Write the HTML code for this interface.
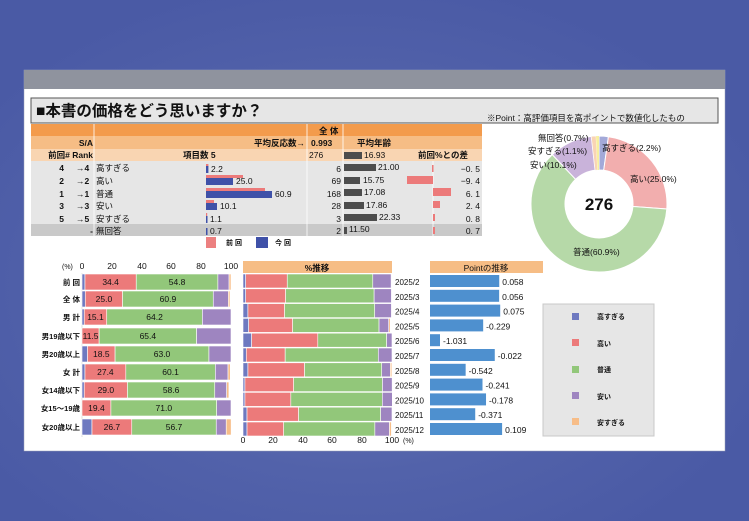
<!DOCTYPE html>
<html><head><meta charset="utf-8">
<style>
html,body{margin:0;padding:0;width:749px;height:521px;overflow:hidden}
svg{display:block}
text{font-family:"Liberation Sans","Noto Sans CJK JP",sans-serif;fill:#111}
</style></head><body>
<svg width="749" height="521" viewBox="0 0 749 521" xmlns="http://www.w3.org/2000/svg">
<defs>
<radialGradient id="bg" cx="0.47" cy="0.55" r="0.6">
<stop offset="0" stop-color="#6a78b8"/><stop offset="0.6" stop-color="#5262aa"/><stop offset="1" stop-color="#4a5aa5"/>
</radialGradient>
</defs>
<rect width="749" height="521" fill="url(#bg)"/>
<rect x="24" y="70" width="701" height="381" fill="#fff" stroke="#9aa0b8" stroke-width="0.5"/>
<rect x="24" y="70" width="701" height="19" fill="#8f939e"/>
<rect x="31" y="98" width="687" height="25" fill="#e6e6e6" stroke="#555" stroke-width="1"/>
<text x="36" y="116" font-size="15.5" font-weight="bold">■本書の価格をどう思いますか？</text>
<text x="487" y="121" font-size="8.5">※Point：高評価項目を高ポイントで数値化したもの</text>

<!-- table -->
<rect x="31" y="124" width="451" height="12" fill="#f39b4c"/>
<rect x="31" y="136" width="451" height="13" fill="#f6bd85"/>
<rect x="31" y="149" width="451" height="12" fill="#f9d5b2"/>
<rect x="31" y="161" width="451" height="63" fill="#e6e6e6"/>
<rect x="31" y="224" width="451" height="12" fill="#c9c9c9"/>
<g stroke="#fff" stroke-width="0.8">
<line x1="94" y1="124" x2="94" y2="236"/><line x1="307" y1="124" x2="307" y2="236"/>
<line x1="343" y1="124" x2="343" y2="236"/><line x1="433" y1="161" x2="433" y2="236"/>
</g>
<g font-size="8.5" font-weight="bold">
<text x="319" y="134">全 体</text>
<text x="93" y="146" text-anchor="end">S/A</text>
<text x="305" y="146" text-anchor="end">平均反応数→</text>
<text x="311" y="146">0.993</text>
<text x="357" y="146">平均年齢</text>
<text x="93" y="158" text-anchor="end">前回# Rank</text>
<text x="183" y="158">項目数 5</text>
<text x="418" y="158">前回%との差</text>
</g>
<g font-size="8.5">
<text x="309" y="158" font-family="Liberation Serif,serif">276</text>
<rect x="344" y="152" width="18" height="7" fill="#4d4d4d"/><text x="364" y="158">16.93</text>
</g>
<g font-size="8.5">
<!-- rows -->
<g><text x="64" y="171" text-anchor="end" font-weight="bold">4</text><text x="76" y="171" font-weight="bold">→4</text><text x="96" y="171">高すぎる</text>
<rect x="206" y="164" width="2.4" height="3" fill="#ec7a7a"/><rect x="206" y="166" width="2.4" height="7" fill="#3f51a8"/><text x="211" y="172">2.2</text>
<text x="341" y="172" text-anchor="end" font-family="Liberation Serif,serif">6</text><rect x="344" y="164" width="32" height="7" fill="#4d4d4d"/><text x="378" y="170">21.00</text>
<rect x="432" y="165" width="1.5" height="7" fill="#ec7a7a"/><text x="480" y="172" text-anchor="end" font-family="Liberation Serif,serif">−0. 5</text></g>
<g><text x="64" y="184" text-anchor="end" font-weight="bold">2</text><text x="76" y="184" font-weight="bold">→2</text><text x="96" y="184">高い</text>
<rect x="206" y="175" width="37" height="3" fill="#ec7a7a"/><rect x="206" y="178" width="27" height="7" fill="#3f51a8"/><text x="236" y="184">25.0</text>
<text x="341" y="184" text-anchor="end" font-family="Liberation Serif,serif">69</text><rect x="344" y="177" width="16" height="7" fill="#4d4d4d"/><text x="363" y="183">15.75</text>
<rect x="407" y="176" width="26" height="8" fill="#ec7a7a"/><text x="480" y="184" text-anchor="end" font-family="Liberation Serif,serif">−9. 4</text></g>
<g><text x="64" y="197" text-anchor="end" font-weight="bold">1</text><text x="76" y="197" font-weight="bold">→1</text><text x="96" y="197">普通</text>
<rect x="206" y="188" width="59" height="3" fill="#ec7a7a"/><rect x="206" y="191" width="66" height="7" fill="#3f51a8"/><text x="275" y="197">60.9</text>
<text x="341" y="197" text-anchor="end" font-family="Liberation Serif,serif">168</text><rect x="344" y="189" width="18" height="7" fill="#4d4d4d"/><text x="364" y="195">17.08</text>
<rect x="433" y="188" width="18" height="8" fill="#ec7a7a"/><text x="480" y="197" text-anchor="end" font-family="Liberation Serif,serif">6. 1</text></g>
<g><text x="64" y="209" text-anchor="end" font-weight="bold">3</text><text x="76" y="209" font-weight="bold">→3</text><text x="96" y="209">安い</text>
<rect x="206" y="200" width="8" height="3" fill="#ec7a7a"/><rect x="206" y="203" width="11" height="7" fill="#3f51a8"/><text x="220" y="209">10.1</text>
<text x="341" y="209" text-anchor="end" font-family="Liberation Serif,serif">28</text><rect x="344" y="202" width="20" height="7" fill="#4d4d4d"/><text x="366" y="208">17.86</text>
<rect x="433" y="201" width="7" height="7" fill="#ec7a7a"/><text x="480" y="209" text-anchor="end" font-family="Liberation Serif,serif">2. 4</text></g>
<g><text x="64" y="222" text-anchor="end" font-weight="bold">5</text><text x="76" y="222" font-weight="bold">→5</text><text x="96" y="222">安すぎる</text>
<rect x="206" y="213" width="1.2" height="3" fill="#ec7a7a"/><rect x="206" y="216" width="1.5" height="7" fill="#3f51a8"/><text x="210" y="222">1.1</text>
<text x="341" y="222" text-anchor="end" font-family="Liberation Serif,serif">3</text><rect x="344" y="214" width="33" height="7" fill="#4d4d4d"/><text x="379" y="220">22.33</text>
<rect x="433" y="214" width="2" height="7" fill="#ec7a7a"/><text x="480" y="222" text-anchor="end" font-family="Liberation Serif,serif">0. 8</text></g>
<g><text x="93" y="234" text-anchor="end" font-weight="bold">- </text><text x="96" y="234">無回答</text>
<rect x="206" y="228" width="1.5" height="7" fill="#3f51a8"/><text x="210" y="234">0.7</text>
<text x="341" y="234" text-anchor="end" font-family="Liberation Serif,serif">2</text><rect x="344" y="227" width="3" height="7" fill="#4d4d4d"/><text x="349" y="232">11.50</text>
<rect x="433" y="227" width="2" height="7" fill="#ec7a7a"/><text x="480" y="234" text-anchor="end" font-family="Liberation Serif,serif">0. 7</text></g>
</g>
<rect x="206" y="237" width="10" height="11" fill="#ec8080"/><text x="226" y="245" font-size="7" font-weight="bold">前 回</text>
<rect x="256" y="237" width="12" height="11" fill="#3f51a8"/><text x="275" y="245" font-size="7" font-weight="bold">今 回</text>

<!-- donut -->
<g transform="translate(599,204)">
<path d="M0,-68 A68,68 0 0,1 9.4,-67.3 L4.7,-33.7 A34,34 0 0,0 0,-34Z" fill="#a3a9d8" stroke="#fff" stroke-width="1"/>
<path d="M9.4,-67.3 A68,68 0 0,1 67.8,5.0 L33.9,2.5 A34,34 0 0,0 4.7,-33.7Z" fill="#f2aeae" stroke="#fff" stroke-width="1"/>
<path d="M67.8,5.0 A68,68 0 1,1 -46.7,-49.4 L-23.4,-24.7 A34,34 0 1,0 33.9,2.5Z" fill="#b6d9a8" stroke="#fff" stroke-width="1"/>
<path d="M-46.7,-49.4 A68,68 0 0,1 -7.7,-67.6 L-3.9,-33.8 A34,34 0 0,0 -23.4,-24.7Z" fill="#c9b3da" stroke="#fff" stroke-width="1"/>
<path d="M-7.7,-67.6 A68,68 0 0,1 -3,-67.9 L-1.5,-34 A34,34 0 0,0 -3.9,-33.8Z" fill="#f9d4b4" stroke="#fff" stroke-width="0.5"/>
<path d="M-3,-67.9 A68,68 0 0,1 0,-68 L0,-34 A34,34 0 0,0 -1.5,-34Z" fill="#f7efa0"/>
<text x="0" y="6" font-size="17" font-weight="bold" text-anchor="middle">276</text>
</g>
<g font-size="8.5">
<text x="538" y="141">無回答(0.7%)</text>
<text x="528" y="154">安すぎる(1.1%)</text>
<text x="530" y="168">安い(10.1%)</text>
<text x="602" y="151">高すぎる(2.2%)</text>
<text x="630" y="182">高い(25.0%)</text>
<text x="573" y="255">普通(60.9%)</text>
</g>

<!-- left stacked chart -->
<g font-size="8.5">
<text x="62" y="269" font-size="7">(%)</text>
<text x="82" y="269" text-anchor="middle">0</text><text x="112" y="269" text-anchor="middle">20</text><text x="142" y="269" text-anchor="middle">40</text><text x="171" y="269" text-anchor="middle">60</text><text x="201" y="269" text-anchor="middle">80</text><text x="231" y="269" text-anchor="middle">100</text>
</g>
<line x1="82" y1="273" x2="82" y2="437" stroke="#bbb" stroke-width="0.5"/>
<g id="lc" font-size="8.5"></g>
<g font-size="7.5" font-weight="bold" text-anchor="end">
<text x="80" y="285">前 回</text><text x="80" y="302">全 体</text><text x="80" y="320">男 計</text><text x="80" y="339">男19歳以下</text><text x="80" y="357">男20歳以上</text><text x="80" y="375">女 計</text><text x="80" y="393">女14歳以下</text><text x="80" y="411">女15～19歳</text><text x="80" y="430">女20歳以上</text>
</g>

<!-- middle chart -->
<rect x="243" y="261" width="149" height="12" fill="#f6bd85"/>
<text x="317" y="271" font-size="8.5" font-weight="bold" text-anchor="middle">%推移</text>
<g font-size="8.5">
<text x="243" y="443" text-anchor="middle">0</text><text x="273" y="443" text-anchor="middle">20</text><text x="303" y="443" text-anchor="middle">40</text><text x="332" y="443" text-anchor="middle">60</text><text x="362" y="443" text-anchor="middle">80</text><text x="392" y="443" text-anchor="middle">100</text><text x="403" y="443" font-size="7">(%)</text>
</g>

<!-- point chart -->
<rect x="430" y="261" width="113" height="12" fill="#f6bd85"/>
<text x="486" y="271" font-size="8.5" text-anchor="middle">Pointの推移</text>
<g id="pc" font-size="8.5"></g>

<!-- legend -->
<rect x="543" y="304" width="111" height="132" fill="#e6e6e6" stroke="#c8c8c8" stroke-width="1"/>
<g font-size="7" font-weight="bold">
<rect x="572" y="313" width="7" height="7" fill="#6e79c0"/><text x="597" y="319">高すぎる</text>
<rect x="572" y="339" width="7" height="7" fill="#ec7a7a"/><text x="597" y="346">高い</text>
<rect x="572" y="366" width="7" height="7" fill="#92c77a"/><text x="597" y="372">普通</text>
<rect x="572" y="392" width="7" height="7" fill="#9e85c0"/><text x="597" y="399">安い</text>
<rect x="572" y="418" width="7" height="7" fill="#f7bd88"/><text x="597" y="425">安すぎる</text>
</g>
</svg>
<script>
var C=["#6e79c0","#ec7a7a","#92c77a","#9e85c0","#f7bd88"];
var NS="http://www.w3.org/2000/svg";
function el(p,t,a,txt){var e=document.createElementNS(NS,t);for(var k in a)e.setAttribute(k,a[k]);if(txt!=null)e.textContent=txt;p.appendChild(e);return e;}
var L=[[2,34.4,54.8,7.5,1.3],[2.2,25.0,60.9,10.1,1.1],[1.5,15.1,64.2,19.2,0],[0,11.5,65.4,23.1,0],[3.7,18.5,63.0,14.8,0],[2.0,27.4,60.1,8.5,1.5],[1.5,29.0,58.6,8.0,1.5],[0,19.4,71.0,9.6,0],[6.7,26.7,56.7,6.7,3.3]];
var ys=[274,291,309,328,346,364,382,400,419];
var g=document.getElementById("lc");
L.forEach(function(r,i){var x=82;r.forEach(function(v,j){var w=v*1.49;if(w>0)el(g,"rect",{x:x,y:ys[i],width:w,height:16,fill:C[j],stroke:"#fff","stroke-width":0.6});
if((j==1||j==2)&&v>9){var s=v.toFixed(1);if(v<12||(j==1&&i==2)){}el(g,"text",{x:x+w/2,y:ys[i]+11,"text-anchor":"middle"},s);}x+=w;});});
var M=[[1.8,27.9,57.4,12.3,0],[1.8,26.8,59.4,11.6,0],[3.3,24.6,60.5,11.2,0],[3.8,29.5,58,6.5,1],[5.8,44.4,46.2,3.6,0],[2.2,26.1,62.5,9.2,0],[3.3,38,51.8,5.8,1],[1.3,32.7,59.6,6.5,0],[1.3,30.8,61.4,6.7,0],[2.7,34.6,55.1,7.6,0],[2.7,24.6,61.2,9.8,1.3]];
var P=[0.058,0.056,0.075,-0.229,-1.031,-0.022,-0.542,-0.241,-0.178,-0.371,0.109];
var D=["2025/2","2025/3","2025/4","2025/5","2025/6","2025/7","2025/8","2025/9","2025/10","2025/11","2025/12"];
var root=document.querySelector("svg");var pc=document.getElementById("pc");
M.forEach(function(r,i){var y=274+i*14.8;var x=243;r.forEach(function(v,j){var w=v*1.49;if(w>0)el(root,"rect",{x:x,y:y,width:w,height:14,fill:C[j],stroke:"#fff","stroke-width":0.6});x+=w;});
var w=66+56*P[i];if(w<10)w=10;el(pc,"rect",{x:430,y:y+1,width:w,height:12,fill:"#4e90cf"});
el(pc,"text",{x:433+w,y:y+11},P[i].toFixed(3));el(pc,"text",{x:395,y:y+11,"font-size":"8"},D[i]);});
</script>
</body></html>
